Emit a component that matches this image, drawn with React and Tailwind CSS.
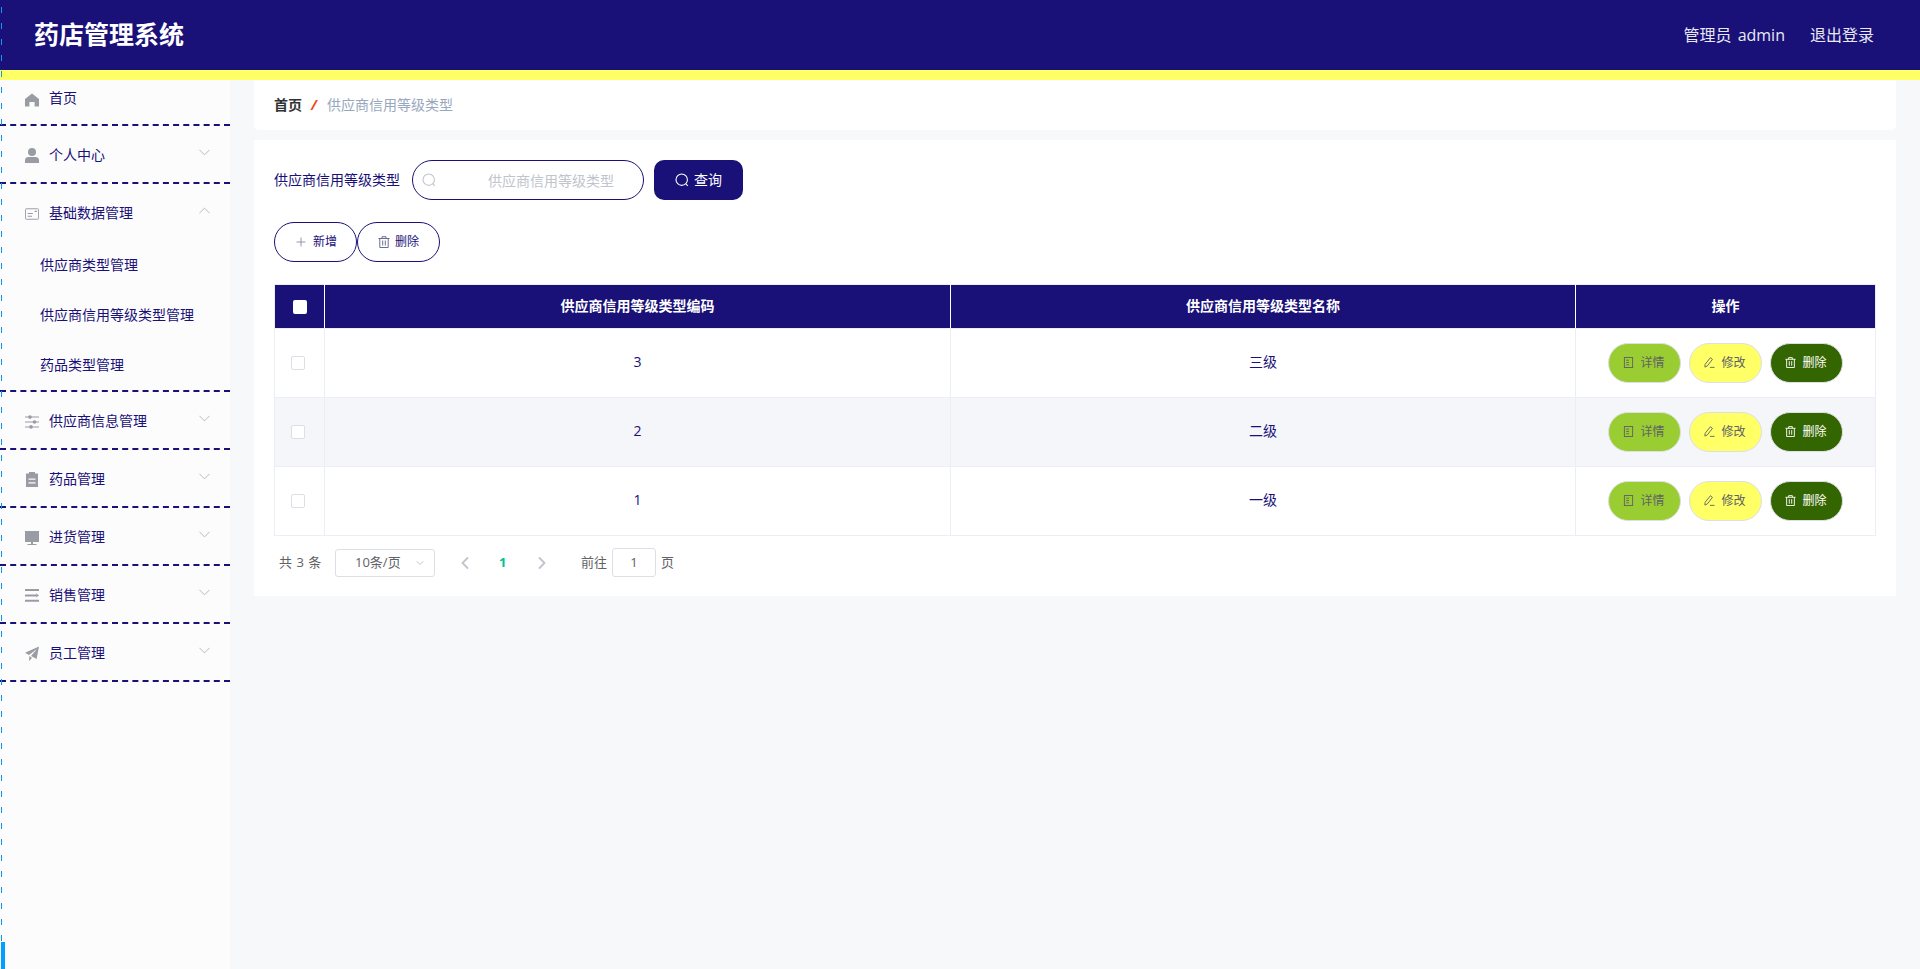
import React from "react";
import { ChevronDown, ChevronUp, ChevronLeft, ChevronRight, Plus } from "lucide-react";

const HomeIcon = () => (
  <svg viewBox="0 0 14 14" className="w-[14px] h-[14px] fill-[#9a9ca3]">
    <path d="M7 0.5 L14 6 V13.5 H9.6 V9 H4.4 V13.5 H0 V6 Z" />
  </svg>
);
const UserIcon = () => (
  <svg viewBox="0 0 14 15" className="w-[14px] h-[15px] fill-[#9a9ca3]">
    <circle cx="7" cy="4" r="4" />
    <path d="M0 15 V12 C0 10 1.6 9 3.4 9 H10.6 C12.4 9 14 10 14 12 V15 Z" />
  </svg>
);
const CardIcon = () => (
  <svg viewBox="0 0 16 14" className="w-[16px] h-[14px] fill-none stroke-[#9a9ca3]">
    <rect x="0.5" y="1" width="15" height="12" rx="1" strokeWidth="1.1" />
    <path d="M3 6.5 H9 M3 9.5 H8 M11 4 H13.5" strokeWidth="1.2" />
  </svg>
);
const SlidersIcon = () => (
  <svg viewBox="0 0 14 14" className="w-[14px] h-[14px] fill-[#9a9ca3]">
    <path d="M0 1.6 H14 V2.6 H0 Z M0 6.5 H14 V7.5 H0 Z M0 11.4 H14 V12.4 H0 Z" />
    <circle cx="5" cy="2.1" r="1.8" />
    <circle cx="9.5" cy="7" r="1.8" />
    <circle cx="6" cy="11.9" r="1.8" />
  </svg>
);
const ClipboardIcon = () => (
  <svg viewBox="0 0 14 15" className="w-[14px] h-[15px] fill-[#9a9ca3]">
    <path fillRule="evenodd" d="M1 1.5 H4 V0 H10 V1.5 H13 V15 H1 Z M3.5 6.5 V7.7 H10.5 V6.5 Z M3.5 10.2 V11.4 H10.5 V10.2 Z" />
  </svg>
);
const MonitorIcon = () => (
  <svg viewBox="0 0 14 14" className="w-[14px] h-[14px] fill-[#9a9ca3]">
    <path d="M0 0 H14 V11 H0 Z M6 11 H8 V13 H11.5 V14 H2.5 V13 H6 Z" />
  </svg>
);
const FoldIcon = () => (
  <svg viewBox="0 0 14 13" className="w-[14px] h-[13px] fill-[#9a9ca3]">
    <path d="M0 0 H14 V2 H0 Z M0 5.4 H11 V7.4 H0 Z M11.2 4.2 L14 6.4 L11.2 8.6 Z M0 10.8 H14 V12.8 H0 Z" />
  </svg>
);
const PlaneIcon = () => (
  <svg viewBox="0 0 14 15" className="w-[14px] h-[15px] fill-[#9a9ca3]">
    <path d="M14 0.5 L0 6.8 L4 9 L12 3 L6 10 L11.6 13 Z M4.4 10 L4 15 L7 12 Z" />
  </svg>
);

const SearchIcon = ({ className }) => (
  <svg viewBox="0 0 14 14" className={`fill-none stroke-current ${className}`}>
    <circle cx="6.7" cy="6.7" r="5.7" strokeWidth="1.1" />
    <path d="M10.8 10.8 L12.8 12.8" strokeWidth="1.1" />
  </svg>
);
const TrashIcon = ({ className }) => (
  <svg viewBox="0 0 12 12" className={`fill-none stroke-current ${className}`}>
    <path d="M0.5 2.5 H11.5 M4 2.5 V0.7 H8 V2.5" strokeWidth="1" />
    <path d="M1.8 2.5 V11.5 H10.2 V2.5" strokeWidth="1" />
    <path d="M4.7 4.5 V9.5 M7.3 4.5 V9.5" strokeWidth="1" />
  </svg>
);
const TicketsIcon = ({ className }) => (
  <svg viewBox="0 0 12 12" className={`fill-none stroke-current ${className}`}>
    <rect x="1.5" y="0.5" width="9" height="11" strokeWidth="1" />
    <path d="M3.5 3.5 H6.5 M3.5 6 H6.5 M3.5 8.5 H6.5" strokeWidth="1" />
  </svg>
);
const EditIcon = ({ className }) => (
  <svg viewBox="0 0 12 12" className={`fill-none stroke-current ${className}`}>
    <path d="M7 0.8 L9.2 2.6 L3.6 9.8 L1 11 L1.2 8 Z" strokeWidth="1" />
    <path d="M6.5 11.3 H11.5" strokeWidth="1" />
  </svg>
);

const menus = [
  { label: "个人中心", icon: UserIcon },
  {
    label: "基础数据管理",
    icon: CardIcon,
    open: true,
    children: ["供应商类型管理", "供应商信用等级类型管理", "药品类型管理"],
  },
  { label: "供应商信息管理", icon: SlidersIcon },
  { label: "药品管理", icon: ClipboardIcon },
  { label: "进货管理", icon: MonitorIcon },
  { label: "销售管理", icon: FoldIcon },
  { label: "员工管理", icon: PlaneIcon },
];

const rows = [
  { code: "3", name: "三级" },
  { code: "2", name: "二级", striped: true },
  { code: "1", name: "一级" },
];

const Sidebar = () => (
  <aside className="w-[230px] shrink-0 bg-[#fcfcfd] text-[14px] text-[#191078]">
    <div className="h-[46px] pl-[25px] pt-[6px] border-b-2 border-dashed border-[#191078] flex items-start">
      <div className="flex items-center h-[22px]">
        <div className="w-[14px] flex justify-center mt-[5px]">
          <HomeIcon />
        </div>
        <span className="ml-[10px]">首页</span>
      </div>
    </div>
    {menus.map((menu) => {
      const Icon = menu.icon;
      return (
        <div key={menu.label} className="border-b-2 border-dashed border-[#191078]">
          <div className="h-[56px] pl-[25px] pr-[16px] flex items-center">
            <div className="w-[14px] flex justify-center mt-[3px]">
              <Icon />
            </div>
            <span className="ml-[10px] flex-1">{menu.label}</span>
            {menu.open ? (
              <ChevronUp className="w-[19px] h-[19px] -mt-[3px] text-[#b4b6bc]" strokeWidth={1.2} />
            ) : (
              <ChevronDown className="w-[19px] h-[19px] -mt-[3px] text-[#b4b6bc]" strokeWidth={1.2} />
            )}
          </div>
          {menu.children && (
            <div className="pb-[1px] -mt-[1px]">
              {menu.children.map((child) => (
                <div key={child} className="h-[50px] pl-[40px] flex items-center">
                  {child}
                </div>
              ))}
            </div>
          )}
        </div>
      );
    })}
  </aside>
);

const ActionButton = ({ icon: Icon, label, className }) => (
  <button
    type="button"
    className={`w-[73px] h-[40px] rounded-[20px] border border-[#dcdfe6] text-[12px] flex items-center justify-center gap-[6px] ${className}`}
  >
    <Icon className="w-[11px] h-[11px]" />
    <span>{label}</span>
  </button>
);

const Checkbox = ({ className }) => (
  <span className={`block w-[14px] h-[14px] rounded-[2px] border border-[#dcdfe6] bg-white ${className}`} />
);

const App = () => {
  return (
    <div className="relative h-[969px] overflow-hidden flex flex-col bg-[#f7f8fa] font-['Open_Sans','Noto_Sans_CJK_SC',sans-serif]">
      {/* blue scroll marker on the left edge */}
      <div className="absolute left-[1px] top-[7px] bottom-0 w-[1px] z-10 bg-[repeating-linear-gradient(to_bottom,#0a9bf0_0,#0a9bf0_6px,transparent_6px,transparent_16px)]" />
      <div className="absolute left-[1px] bottom-0 w-[4px] h-[27px] z-10 bg-[#00a0ff]" />

      <header className="h-[80px] shrink-0 bg-[#191078] border-b-[10px] border-[#ffff66] flex items-center justify-between pl-[34px] pr-[46px] text-white">
        <h1 className="text-[25px] font-bold">药店管理系统</h1>
        <div className="flex items-center gap-[25px] text-[16px] text-[#e8e8f4]">
          <span className="[word-spacing:2px]">管理员 admin</span>
          <span>退出登录</span>
        </div>
      </header>

      <div className="flex flex-1">
        <Sidebar />
        <main className="flex-1 pl-[24px] pr-[24px]">
          <div className="h-[50px] bg-white rounded-b-[5px] pl-[20px] pb-[2px] flex items-center text-[14px]">
            <span className="font-bold text-[#303133]">首页</span>
            <span className="ml-[9px] mr-[10px] font-bold italic text-[#f04a1a]">/</span>
            <span className="text-[#97a8be]">供应商信用等级类型</span>
          </div>

          <section className="mt-[10px] h-[456px] bg-white px-[20px] pt-[20px]">
            <div className="flex items-center text-[14px]">
              <span className="text-[#191078] -mt-[1px]">供应商信用等级类型</span>
              <div className="relative ml-[12px] w-[232px]">
                <SearchIcon className="absolute left-[10px] top-[13px] w-[14px] h-[14px] text-[#c0c4cc]" />
                <input
                  placeholder="供应商信用等级类型"
                  className="w-full h-[40px] rounded-[20px] border border-[#191078] pl-[61px] pr-[15px] text-center outline-none placeholder:text-[#c0c4cc]"
                />
              </div>
              <button
                type="button"
                className="ml-[10px] w-[89px] h-[40px] rounded-[10px] bg-[#191078] text-white flex items-center justify-center gap-[5px]"
              >
                <SearchIcon className="w-[14px] h-[14px]" />
                <span className="-mt-[2px]">查询</span>
              </button>
            </div>

            <div className="flex mt-[22px] text-[12px] text-[#191078]">
              <button
                type="button"
                className="w-[83px] h-[40px] rounded-[20px] border border-[#191078] bg-white flex items-center justify-center gap-[5px]"
              >
                <Plus className="w-[14px] h-[14px] text-[#6a6f8f]" strokeWidth={1.2} />
                <span>新增</span>
              </button>
              <button
                type="button"
                className="w-[83px] h-[40px] rounded-[20px] border border-[#191078] bg-white flex items-center justify-center gap-[5px]"
              >
                <TrashIcon className="w-[12px] h-[12px] text-[#6a6f8f]" />
                <span>删除</span>
              </button>
            </div>

            <table className="mt-[22px] w-[1601px] table-fixed border-collapse text-[14px] text-[#191078]">
              <colgroup>
                <col className="w-[50px]" />
                <col className="w-[626px]" />
                <col className="w-[625px]" />
                <col className="w-[300px]" />
              </colgroup>
              <thead>
                <tr className="h-[44px] bg-[#191078] text-white">
                  <th className="border border-[#ebeef5] border-r-white">
                    <span className="block w-[14px] h-[14px] rounded-[2px] bg-white ml-[18px] mt-[1px]" />
                  </th>
                  <th className="border border-[#ebeef5] border-r-white font-bold pb-[3px]">供应商信用等级类型编码</th>
                  <th className="border border-[#ebeef5] border-r-white font-bold pb-[3px]">供应商信用等级类型名称</th>
                  <th className="border border-[#ebeef5] font-bold pb-[3px]">操作</th>
                </tr>
              </thead>
              <tbody>
                {rows.map((row) => (
                  <tr key={row.code} className={`h-[69px] ${row.striped ? "bg-[#f5f6fa]" : "bg-white"}`}>
                    <td className="border border-[#ebeef5]">
                      <Checkbox className="ml-[16px]" />
                    </td>
                    <td className="border border-[#ebeef5] text-center pb-[4px]">{row.code}</td>
                    <td className="border border-[#ebeef5] text-center pb-[4px]">{row.name}</td>
                    <td className="border border-[#ebeef5]">
                      <div className="flex justify-center gap-[8px] pr-[1px] -mt-[1px]">
                        <ActionButton icon={TicketsIcon} label="详情" className="bg-[#9acd32] text-[#606266]" />
                        <ActionButton icon={EditIcon} label="修改" className="bg-[#ffff66] text-[#606266]" />
                        <ActionButton icon={TrashIcon} label="删除" className="bg-[#336600] text-white" />
                      </div>
                    </td>
                  </tr>
                ))}
              </tbody>
            </table>

            <div className="mt-[12px] flex items-center text-[13px] text-[#606266] pl-[5px]">
              <span className="w-[41px] whitespace-nowrap [word-spacing:1px]">共 3 条</span>
              <div className="relative ml-[15px] w-[100px] h-[28px] rounded-[3px] border border-[#dcdfe6] flex items-center pl-[19px]">
                10条/页
                <ChevronDown className="absolute right-[8px] top-[7px] w-[12px] h-[12px] text-[#c0c4cc]" />
              </div>
              <ChevronLeft className="ml-[20px] w-[20px] h-[20px] text-[#c0c4cc]" strokeWidth={2.2} />
              <span className="ml-[24px] w-[8px] font-bold text-[#00c292]">1</span>
              <ChevronRight className="ml-[25px] w-[20px] h-[20px] text-[#c0c4cc]" strokeWidth={2.2} />
              <span className="ml-[29px]">前往</span>
              <span className="ml-[5px] w-[44px] h-[29px] rounded-[3px] border border-[#dcdfe6] flex items-center justify-center">1</span>
              <span className="ml-[5px]">页</span>
            </div>
          </section>
        </main>
      </div>
    </div>
  );
};

export default App;
